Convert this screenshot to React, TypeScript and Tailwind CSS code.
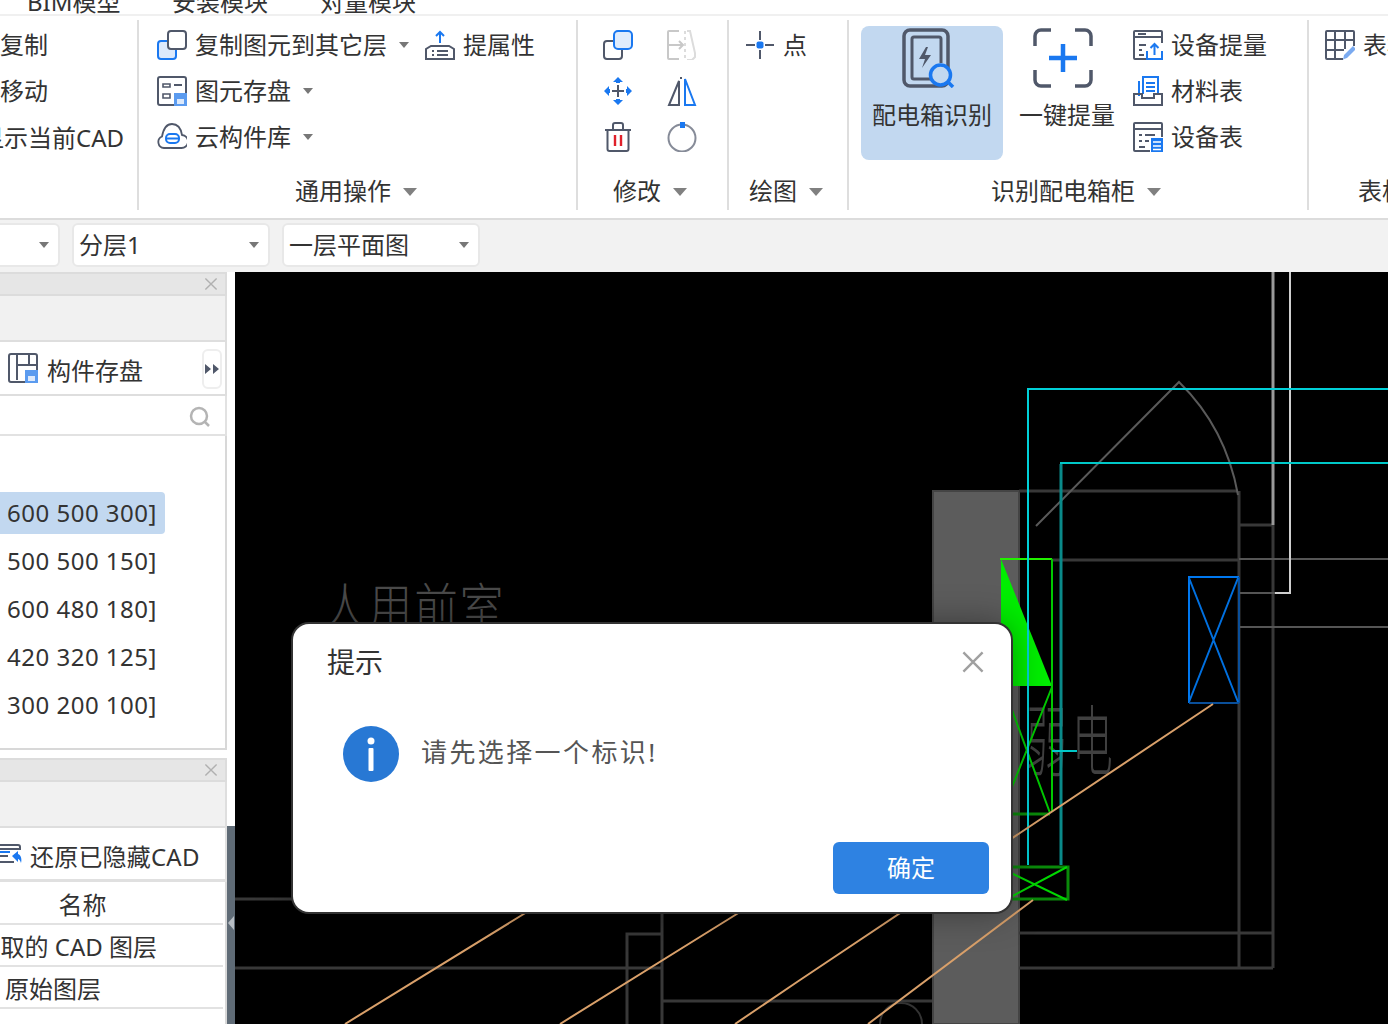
import type { ReactNode } from "react"

const slate = "#50586a"
const blue = "#1a78f0"

function Ico({ children, size = 30 }: { children: ReactNode; size?: number }) {
  return (
    <svg width={size} height={size} viewBox={`0 0 ${size} ${size}`} fill="none" className="shrink-0">
      {children}
    </svg>
  )
}

function Caret({ big }: { big?: boolean }) {
  return big ? (
    <svg width="14" height="8" viewBox="0 0 14 8" className="ml-3 mt-[2px] shrink-0">
      <path d="M0 0H14L7 8Z" fill="#808080" />
    </svg>
  ) : (
    <svg width="10" height="6" viewBox="0 0 10 6" className="shrink-0">
      <path d="M0 0H10L5 6Z" fill="#777" />
    </svg>
  )
}

const CopyLayer = () => (
  <Ico>
    <rect x="1" y="11" width="18" height="18" rx="3" stroke={blue} strokeWidth="2" fill="#dce9fb" />
    <rect x="11" y="1" width="18" height="18" rx="3" stroke={slate} strokeWidth="2" fill="#fff" />
  </Ico>
)
const SaveElem = () => (
  <Ico>
    <path d="M17 29H3a2 2 0 0 1-2-2V3a2 2 0 0 1 2-2h24a2 2 0 0 1 2 2v14" stroke={slate} strokeWidth="2" />
    <path d="M6 8h7v3H6zM6 18h7v4H6z" stroke={slate} strokeWidth="1.6" />
    <path d="M17 9h8M17 18h0" stroke={slate} strokeWidth="2" />
    <rect x="17" y="17" width="13" height="13" fill="#5b9bef" />
    <rect x="20" y="23" width="7" height="5" fill="#dce9fb" />
  </Ico>
)
const Cloud = () => (
  <Ico>
    <path d="M7 26a6 6 0 0 1-2-11.500C6 9 8 2 15 2c6 0 9 5 10 11a6.500 6.500 0 0 1-1 13Z" stroke={slate} strokeWidth="1.800" />
    <rect x="9" y="12" width="13" height="9" rx="4" stroke={blue} strokeWidth="2" />
    <path d="M9 16.500h13" stroke={blue} strokeWidth="2" />
  </Ico>
)
const Extract = () => (
  <Ico>
    <path d="M15 13V2M11 6l4-4 4 4" stroke={blue} strokeWidth="2" />
    <path d="M1 29V19l5-3h18l5 3v10Z" stroke={slate} strokeWidth="2" />
    <path d="M7 21h2M12 21h11M7 25h2M12 25h11" stroke={slate} strokeWidth="2" />
  </Ico>
)
const Dup = () => (
  <Ico>
    <rect x="1" y="11" width="18" height="18" rx="3" stroke={slate} strokeWidth="2" />
    <rect x="11" y="1" width="18" height="18" rx="4" stroke={blue} strokeWidth="2" fill="#e0ecfc" />
  </Ico>
)
const Disabled = () => (
  <Ico>
    <path d="M12 1H2a1 1 0 0 0-1 1v26a1 1 0 0 0 1 1h10M1 15h14M12 11l4 4-4 4" stroke="#c8c8c8" strokeWidth="2" />
    <path d="M20 1h3l5 22v4l-3 3h-5" stroke="#dcdcdc" strokeWidth="2" />
    <path d="M18 1v29" stroke="#dcdcdc" strokeWidth="2" strokeDasharray="3 3" />
  </Ico>
)
const MoveIco = () => (
  <Ico>
    <path d="M15 9v12M9 15h12" stroke={slate} strokeWidth="2" />
    <path d="M15 1l5 5h-3v1h-4V6h-3zM15 29l5-5h-3v-1h-4v1h-3zM1 15l5-5v3h1v4H6v3zM29 15l-5-5v3h-1v4h1v3z" fill={blue} />
  </Ico>
)
const Mirror = () => (
  <Ico>
    <path d="M12 5v24H2Z" stroke={slate} strokeWidth="2" />
    <path d="M14 1v2" stroke={slate} strokeWidth="2" />
    <path d="M18 3v26h10Z" stroke={blue} strokeWidth="2" />
  </Ico>
)
const Trash = () => (
  <Ico>
    <path d="M2 8h26M10 7V3a2 2 0 0 1 2-2h6a2 2 0 0 1 2 2v4" stroke={slate} strokeWidth="2" />
    <path d="M4.500 8v19a2 2 0 0 0 2 2h17a2 2 0 0 0 2-2V8" stroke={slate} strokeWidth="2" />
    <path d="M12 13v11M18 13v11" stroke="#e0202a" strokeWidth="2.400" />
  </Ico>
)
const Rotate = () => (
  <Ico>
    <circle cx="15" cy="16" r="13.500" stroke="#868b98" strokeWidth="2" />
    <rect x="13" y="0" width="5" height="6" fill={blue} />
  </Ico>
)
const PointIco = () => (
  <Ico>
    <path d="M15 1v9M15 20v9M1 15h9M20 15h9" stroke={slate} strokeWidth="2" />
    <rect x="11.500" y="11.500" width="7" height="7" rx="2" fill={blue} />
  </Ico>
)
const PanelIco = () => (
  <svg width="60" height="60" viewBox="0 0 60 60" fill="none" className="shrink-0">
    <rect x="2" y="2" width="44" height="56" rx="6" stroke={slate} strokeWidth="3.500" />
    <path d="M30 51H12a2 2 0 0 1-2-2V11a2 2 0 0 1 2-2h25a2 2 0 0 1 2 2v24" stroke={slate} strokeWidth="3" />
    <path d="M24 19 17 31h6l-3 9 9-13h-6l3-8Z" fill={slate} />
    <circle cx="38.500" cy="47" r="10" fill="#c2d8f0" stroke={blue} strokeWidth="3.500" />
    <path d="M46 54l5 5" stroke={blue} strokeWidth="3.500" />
  </svg>
)
const ScanPlus = () => (
  <svg width="60" height="60" viewBox="0 0 60 60" fill="none" className="shrink-0 mr-2">
    <path d="M18 2H8a6 6 0 0 0-6 6v10M42 2h10a6 6 0 0 1 6 6v10M18 58H8a6 6 0 0 1-6-6V42M42 58h10a6 6 0 0 0 6-6V42" stroke={slate} strokeWidth="3.500" />
    <path d="M30 16v28M16 30h28" stroke={blue} strokeWidth="4.500" />
  </svg>
)
const DevExtract = () => (
  <Ico>
    <path d="M13 29H2a1 1 0 0 1-1-1V2a1 1 0 0 1 1-1h26a1 1 0 0 1 1 1v11M1 7h28M5 4h8" stroke={slate} strokeWidth="2" />
    <path d="M6 15h7M6 20h3M6 25h5" stroke={slate} strokeWidth="2" />
    <path d="M14 21v8h15v-8M21.500 25v-11M17.500 18l4-4 4 4" stroke={blue} strokeWidth="2" />
  </Ico>
)
const Material = () => (
  <Ico>
    <path d="M6 20V5M10 18V1h15v17" stroke={blue} strokeWidth="2" />
    <path d="M13 7h9M13 11h9M13 15h9" stroke={blue} strokeWidth="2" />
    <path d="M1 18v11h28V18h-8v4H9v-4Z" stroke={slate} strokeWidth="2" />
  </Ico>
)
const DevTable = () => (
  <Ico>
    <path d="M17 29H2a1 1 0 0 1-1-1V2a1 1 0 0 1 1-1h26a1 1 0 0 1 1 1v13M1 7h28" stroke={slate} strokeWidth="2" />
    <path d="M6 13h3M12 13h10M6 19h3M12 19h4M6 25h6" stroke={slate} strokeWidth="2" />
    <path d="M18 16h12v14H18z" fill={blue} />
    <path d="M20 20h8M20 24h8M20 27.500h8" stroke="#fff" strokeWidth="1.500" />
  </Ico>
)
const TableEdit = () => (
  <Ico>
    <path d="M18 29H2a1 1 0 0 1-1-1V2a1 1 0 0 1 1-1h26a1 1 0 0 1 1 1v14M1 10h28M1 20h18M10 1v28M20 1v18" stroke={slate} strokeWidth="2" />
    <path d="M19 29l-1 1 1-5 9-9 3 3-9 9Z" fill="#7aaaf0" />
  </Ico>
)
const SaveComp = () => (
  <Ico>
    <path d="M17 29H3a2 2 0 0 1-2-2V3a2 2 0 0 1 2-2h24a2 2 0 0 1 2 2v14M9 2v25M9 12h19M21 2v10" stroke={slate} strokeWidth="2" />
    <rect x="17" y="17" width="13" height="13" fill="#5b9bef" />
    <rect x="20" y="23" width="7" height="5" fill="#dce9fb" />
  </Ico>
)
const Restore = () => (
  <svg width="24" height="24" viewBox="0 0 24 24" fill="none" className="shrink-0">
    <path d="M0 3h18a2 2 0 0 1 2 2v2H0M0 20h14M0 14h8" stroke={slate} strokeWidth="2" />
    <path d="M0 10h10" stroke={blue} strokeWidth="2" />
    <path d="M12 14l6-5v3c3 1 4 5 3 9-1-3-2-4-3-4v3Z" fill={blue} />
  </svg>
)
const XIcon = ({ size, color }: { size: number; color: string }) => (
  <svg width={size} height={size} viewBox="0 0 20 20" className="shrink-0">
    <path d="M2 2l16 16M18 2L2 18" stroke={color} strokeWidth="2" fill="none" />
  </svg>
)

function Row({ icon, label, caret }: { icon: ReactNode; label: string; caret?: boolean }) {
  return (
    <div className="h-[46px] flex items-center gap-2 whitespace-nowrap">
      {icon}
      <span>{label}</span>
      {caret && <span className="ml-1"><Caret /></span>}
    </div>
  )
}

function Group({ width, footer, footerClass, children }: { width: string; footer: string; footerClass?: string; children: ReactNode }) {
  return (
    <div className={`${width} h-[190px] shrink-0 border-r-2 border-[#dedede] flex flex-col overflow-hidden`}>
      <div className="h-[152px] pt-[2px]">{children}</div>
      <div className={`h-[38px] flex items-center whitespace-nowrap ${footerClass ?? "justify-center"}`}>
        <span>{footer}</span>
        <Caret big />
      </div>
    </div>
  )
}

function Select({ label, className }: { label: string; className: string }) {
  return (
    <div className={`h-[44px] bg-white border-2 border-[#e8e8e8] flex items-center justify-between pl-[5px] pr-[9px] ${className}`}>
      <span>{label}</span>
      <Caret />
    </div>
  )
}

function PanelHead() {
  return (
    <>
      <div className="h-[24px] bg-[#e6e6e6] border-y-2 border-[#dcdcdc] border-r-2 flex items-center justify-end pr-[7px]">
        <XIcon size={14} color="#b0b0b0" />
      </div>
      <div className="h-[46px] bg-[#f1f1f1] border-b-2 border-r-2 border-[#dedede]" />
    </>
  )
}

function Drawing() {
  const wall = "#383838"
  const peach = "#d9a06a"
  return (
    <svg viewBox="235 272 1153 752" className="absolute inset-0 w-full h-full" fill="none">
      <rect x="933" y="491" width="86" height="533" fill="#5c5c5c" stroke="#444" strokeWidth="2" />
      <g stroke={wall} strokeWidth="3">
        <path d="M1019 491H1238M1239 491V968M1239 525H1273M1273 525V968M1052 560H1239M1019 933H1273M1019 968H1273" />
        <path d="M235 899H293M235 968H662M627 1024V934H662M662 912V1024M662 1001H932" />
      </g>
      <path d="M1239 559H1388M1239 627H1388M1239 593H1275" stroke="#555" strokeWidth="2" />
      <path d="M1273 272V525" stroke="#9a9a9a" strokeWidth="3" />
      <path d="M1290 272V593H1275" stroke="#cfcfcf" strokeWidth="2" />
      <path d="M1036 526L1179 382Q1226 428 1238 495" stroke="#5a5a5a" strokeWidth="2" />
      <path d="M880 1024A21 21 0 0 1 922 1024" stroke="#333" strokeWidth="2" />
      <text transform="translate(323 626) scale(0.95 1.1)" fontSize="46" fill="#4a4a4a" letterSpacing="2" fontWeight="300" fontFamily="'Noto Sans CJK SC', sans-serif">人用前室</text>
      <text transform="translate(1026 770) scale(0.85 1.6)" fontSize="48" fill="#404040" letterSpacing="6" fontWeight="300" fontFamily="'Noto Sans CJK SC', sans-serif">弱电</text>
      <path d="M1001 559L1052 686H1001Z" fill="#00ee00" />
      <path d="M1000 559H1052" stroke="#22f000" strokeWidth="2" />
      <path d="M1052 559V812M1052 687L1012 787M1012 710L1050 813" stroke="#00c800" strokeWidth="2" />
      <path d="M1000 814H1050" stroke="#0a8a0a" strokeWidth="3" />
      <path d="M1000 867H1068V899H1000" stroke="#0a8a0a" strokeWidth="3" />
      <path d="M1005 870L1067 900M1005 900L1067 867" stroke="#00d800" strokeWidth="2" />
      <path d="M1028 865V389H1388" stroke="#00d0d8" strokeWidth="2" />
      <path d="M1061 865V464" stroke="#0a8a8a" strokeWidth="3" />
      <path d="M1060 463H1388M1052 751H1077" stroke="#00c8c8" strokeWidth="2" />
      <path d="M1189 703V577H1239" stroke="#0078f0" strokeWidth="2" />
      <path d="M1239 577V703M1189 703H1239" stroke="#0a4f9a" strokeWidth="2" />
      <path d="M1189 578L1238 702M1238 578L1189 702" stroke="#0070e0" strokeWidth="2" />
      <path d="M1213 704L800 980L735 1024M1033 900L868 1024M740 912L560 1024M527 912L345 1024" stroke={peach} strokeWidth="2" />
    </svg>
  )
}

export default function App() {
  return (
    <div className="w-[1388px] h-[1024px] overflow-hidden bg-white flex flex-col text-[24px] leading-[30px] text-[#333] font-['Noto_Sans','Noto_Sans_CJK_SC',sans-serif]">
      {/* tabs, mostly cut off by the window top */}
      <div className="h-[16px] shrink-0 border-b-2 border-[#f0f0f0] overflow-hidden">
        <div className="flex -mt-[13px] pl-[27px] whitespace-nowrap">
          <span className="w-[145px]">BIM模型</span>
          <span className="w-[148px]">安装模块</span>
          <span>对量模块</span>
        </div>
      </div>

      {/* ribbon */}
      <div className="h-[204px] shrink-0 border-b-2 border-[#dcdcdc] pt-1 flex items-start">
        <Group width="w-[139px]" footer="" footerClass="hidden">
          <div className="h-[46px] flex items-center whitespace-nowrap">复制</div>
          <div className="h-[46px] flex items-center whitespace-nowrap">移动</div>
          <div className="h-[46px] pt-[2px] flex items-center whitespace-nowrap -ml-[20px]">显示当前CAD</div>
        </Group>

        <Group width="w-[439px]" footer="通用操作" footerClass="justify-start pl-[156px]">
          <div className="pl-[18px]">
            <div className="flex items-center">
              <Row icon={<CopyLayer />} label="复制图元到其它层" caret />
              <div className="ml-4"><Row icon={<Extract />} label="提属性" /></div>
            </div>
            <Row icon={<SaveElem />} label="图元存盘" caret />
            <Row icon={<Cloud />} label="云构件库" caret />
          </div>
        </Group>

        <Group width="w-[151px]" footer="修改" footerClass="justify-start pl-[35px]">
          <div className="pl-[25px] grid grid-cols-[30px_30px] gap-x-[34px] auto-rows-[46px] items-center">
            <Dup />
            <Disabled />
            <MoveIco />
            <Mirror />
            <Trash />
            <Rotate />
          </div>
        </Group>

        <Group width="w-[120px]" footer="绘图" footerClass="justify-start pl-[20px]">
          <div className="pl-[16px]">
            <Row icon={<PointIco />} label="点" />
          </div>
        </Group>

        <Group width="w-[460px]" footer="识别配电箱柜" footerClass="justify-start pl-[142px]">
          <div className="pl-3 flex items-start">
            <div className="mt-[4px] w-[142px] h-[134px] rounded-lg bg-[#c2d8f0] pt-[2px] flex flex-col items-center">
              <PanelIco />
              <div className="mt-[12px]">配电箱识别</div>
            </div>
            <div className="mt-[4px] ml-4 w-[96px] pt-[2px] flex flex-col items-center">
              <ScanPlus />
              <div className="mt-[12px] whitespace-nowrap">一键提量</div>
            </div>
            <div className="ml-[18px]">
              <Row icon={<DevExtract />} label="设备提量" />
              <Row icon={<Material />} label="材料表" />
              <Row icon={<DevTable />} label="设备表" />
            </div>
          </div>
        </Group>

        <div className="flex-1 h-[190px] flex flex-col overflow-hidden whitespace-nowrap">
          <div className="h-[152px] pt-[2px] pl-[16px]">
            <Row icon={<TableEdit />} label="表格提量" />
          </div>
          <div className="h-[38px] flex items-center pl-[49px]">表格识别</div>
        </div>
      </div>

      {/* floor selectors */}
      <div className="h-[52px] shrink-0 bg-[#f2f2f2] pt-[3px] flex items-start gap-3">
        <Select label="" className="w-[60px] rounded-r-md border-l-0" />
        <Select label="分层1" className="w-[198px] rounded-md" />
        <Select label="一层平面图" className="w-[198px] rounded-md" />
      </div>

      <div className="flex-1 min-h-0 flex">
        {/* left panels */}
        <div className="w-[227px] shrink-0 bg-white flex flex-col whitespace-nowrap">
          <PanelHead />
          <div className="h-[54px] border-b-2 border-r-2 border-[#dedede] flex items-center pl-2 relative">
            <SaveComp />
            <span className="ml-[9px] pt-[6px]">构件存盘</span>
            <div className="absolute right-[3px] top-[7px] w-[20px] h-[40px] rounded-md border-2 border-[#eeeeee] flex items-center justify-center">
              <svg width="14" height="10" viewBox="0 0 14 10">
                <path d="M0 0l6 5-6 5zM8 0l6 5-6 5z" fill={slate} />
              </svg>
            </div>
          </div>
          <div className="h-[40px] pt-1 border-b-2 border-r-2 border-[#e2e2e2] flex items-center justify-end pr-[14px]">
            <svg width="22" height="22" viewBox="0 0 22 22" fill="none">
              <circle cx="10" cy="10" r="8" stroke="#b4b4b4" strokeWidth="2.500" />
              <path d="M16 16l4 4" stroke="#b4b4b4" strokeWidth="2.500" />
            </svg>
          </div>
          <div className="h-[314px] border-b-2 border-r-2 border-[#d8d8d8] pt-[53px] tracking-[0.5px]">
            {["600 500 300]", "500 500 150]", "600 480 180]", "420 320 125]", "300 200 100]"].map((t, i) => (
              <div key={t} className="h-[48px] flex items-center">
                <div className={`w-[165px] h-[42px] pl-[7px] flex items-center rounded-r-sm ${i === 0 ? "bg-[#c2d8f0]" : ""}`}>{t}</div>
              </div>
            ))}
          </div>
          <div className="h-[8px]" />
          <PanelHead />
          <div className="h-[54px] border-b-[3px] border-r-2 border-[#e0e0e0] flex items-center">
            <div className="w-[24px] shrink-0"><Restore /></div>
            <span className="ml-[6px] pt-[6px] tracking-[0.2px]">还原已隐藏CAD</span>
          </div>
          <div className="flex-1 border-r-2 border-[#d8d8d8] pr-[2px]">
            <div className="h-[43px] pt-[4px] border-b-2 border-[#e2e2e2] flex items-center justify-center pr-[58px]">名称</div>
            <div className="h-[42px] pt-[4px] border-b-2 border-[#e2e2e2] flex items-center">
              <div className="w-[157px] flex justify-end">提取的 CAD 图层</div>
            </div>
            <div className="h-[42px] pt-[3px] border-b-2 border-[#e2e2e2] flex items-center pl-[5px]">原始图层</div>
          </div>
        </div>

        {/* splitter */}
        <div className="w-[8px] shrink-0 flex flex-col">
          <div className="h-[554px] bg-white" />
          <div className="flex-1 bg-[#5f6b76] pt-[90px]">
            <svg width="8" height="14" viewBox="0 0 8 14">
              <path d="M7 0V14L1 7Z" fill="#b8bec4" />
            </svg>
          </div>
        </div>

        {/* cad canvas */}
        <div className="flex-1 bg-black relative">
          <Drawing />

          <div className="absolute left-[58px] top-[352px] w-[718px] h-[288px] bg-white rounded-2xl shadow-[0_0_0_2px_#333333,0_0_36px_rgba(0,0,0,0.4)] flex flex-col">
            <div className="h-[76px] pl-[34px] pr-[26px] flex items-center justify-between text-[28px] leading-[36px]">
              <span>提示</span>
              <XIcon size={24} color="#a0a0a0" />
            </div>
            <div className="flex-1 pl-[50px] pt-[26px] flex items-start gap-[23px]">
              <div className="w-[56px] h-[56px] rounded-full bg-[#2878d4] flex items-center justify-center">
                <svg width="8" height="34" viewBox="0 0 8 34">
                  <circle cx="4" cy="4" r="3.500" fill="#fff" />
                  <rect x="1.500" y="11" width="5" height="23" rx="1" fill="#fff" />
                </svg>
              </div>
              <span className="-ml-px -mt-[2px] text-[26px] leading-[56px] text-[#555] tracking-[2.400px]">请先选择一个标识!</span>
            </div>
            <div className="h-[70px] flex justify-end pr-[22px]">
              <button className="w-[156px] h-[52px] bg-[#2e82e2] text-white rounded-md flex items-center justify-center">确定</button>
            </div>
          </div>
        </div>
      </div>
    </div>
  )
}
